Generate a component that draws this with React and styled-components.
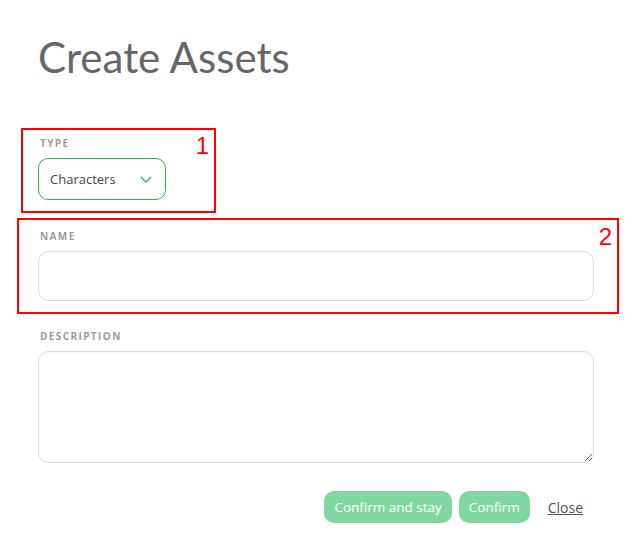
import React from "react";
import styled, { createGlobalStyle } from "styled-components";

const Global = createGlobalStyle`
  html, body { margin: 0; padding: 0; background: #fff; }
  * { box-sizing: border-box; }
`;

const Page = styled.div`
  width: 635px;
  min-height: 557px;
  padding: 32px 41px 0 38px;
  font-family: "Open Sans", "Noto Sans", sans-serif;
`;

const Title = styled.h1`
  margin: 0 0 54px;
  font-family: Lato, "Open Sans", sans-serif;
  font-weight: 400;
  font-size: 42px;
  line-height: 50px;
  color: #666;
`;

const Group = styled.div`
  position: relative;
  display: flex;
  flex-direction: column;
  align-items: ${(p) => (p.$inline ? "flex-start" : "stretch")};
  margin-bottom: ${(p) => p.$gap ?? 28}px;
`;

const Label = styled.label`
  font-size: 10px;
  line-height: 14px;
  font-weight: 700;
  letter-spacing: 1.4px;
  color: #9b9b9b;
  margin: 0 0 8px 2px;
`;

const Select = styled.div`
  width: 128px;
  height: 42px;
  border: 1px solid #2fb552;
  border-radius: 10px;
  display: flex;
  align-items: center;
  justify-content: space-between;
  padding: 0 13px 0 11px;
  font-size: 13px;
  color: #444;
`;

const Input = styled.input`
  height: 50px;
  border: 1px solid #dcdcdc;
  border-radius: 10px;
  box-shadow: inset 0 1px 2px rgba(0, 0, 0, 0.04);
  outline: none;
  font: inherit;
  padding: 0 12px;
`;

const TextArea = styled.textarea`
  height: 112px;
  border: 1px solid #dcdcdc;
  border-radius: 10px;
  box-shadow: inset 0 1px 2px rgba(0, 0, 0, 0.04);
  outline: none;
  font: inherit;
  padding: 10px 12px;
  display: block;
`;

const Annotation = styled.div`
  position: absolute;
  border: 2px solid #f00;
  pointer-events: none;
  top: ${(p) => p.$top}px;
  left: ${(p) => p.$left}px;
  right: ${(p) => p.$right}px;
  bottom: ${(p) => p.$bottom}px;
  ${(p) => (p.$width ? `width: ${p.$width}px;` : "")}
`;

const Badge = styled.span`
  position: absolute;
  top: ${(p) => p.$top}px;
  right: 5px;
  font-family: "Liberation Sans", Arial, sans-serif;
  font-size: 24px;
  line-height: 24px;
  color: #f00;
`;

const Actions = styled.div`
  display: flex;
  justify-content: flex-end;
  align-items: center;
  gap: 7px;
  padding-right: 11px;
`;

const Button = styled.button`
  height: 32px;
  padding: 0 ${(p) => p.$pad}px;
  border: none;
  border-radius: 10px;
  background: #80d8a0;
  color: #fff;
  font-family: "Open Sans", "Noto Sans", sans-serif;
  font-size: 13.5px;
`;

const CloseLink = styled.a`
  margin-left: 11px;
  font-size: 14px;
  color: #555;
  text-decoration: underline;
  cursor: pointer;
`;

const Chevron = () => (
  <svg width="12" height="7" viewBox="0 0 12 7" fill="none">
    <polyline points="1,1 6,6 11,1" stroke="#2fb552" strokeWidth="1.3" />
  </svg>
);

export default function App() {
  return (
    <>
      <Global />
      <Page>
        <Title>Create Assets</Title>

        <Group $inline $gap={29}>
          <Label>TYPE</Label>
          <Select>
            <span>Characters</span>
            <Chevron />
          </Select>
          <Annotation $top={-8} $left={-17} $width={195} $bottom={-13}>
            <Badge $top={4}>1</Badge>
          </Annotation>
        </Group>

        <Group>
          <Label>NAME</Label>
          <Input />
          <Annotation $top={-11} $left={-21} $right={-25} $bottom={-13}>
            <Badge $top={5}>2</Badge>
          </Annotation>
        </Group>

        <Group>
          <Label>DESCRIPTION</Label>
          <TextArea />
        </Group>

        <Actions>
          <Button $pad={10}>Confirm and stay</Button>
          <Button $pad={10}>Confirm</Button>
          <CloseLink>Close</CloseLink>
        </Actions>
      </Page>
    </>
  );
}
